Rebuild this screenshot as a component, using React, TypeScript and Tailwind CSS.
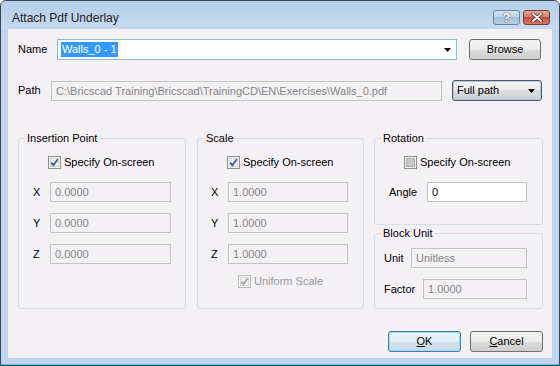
import React from 'react';

// Win7-style check box, drawn as a small svg
function CheckBox({ checked, disabled }: { checked?: boolean; disabled?: boolean }) {
  const edge = disabled ? '#bcbcbc' : '#8e8f8f';
  const mark = disabled ? '#a8a8a8' : '#3f5a94';
  const inner = checked || disabled ? '#f3f3f3' : '#c9c9c9';
  return (
    <svg width="13" height="13" viewBox="0 0 13 13" className="shrink-0">
      <rect x="0.5" y="0.5" width="12" height="12" fill="#f7f7f7" stroke={edge} />
      <rect x="2.5" y="2.5" width="8" height="8" fill={inner} stroke={checked || disabled ? '#d6d6d6' : '#a9a9a9'} />
      {checked && <path d="M3.2 6.6 L5.4 9.2 L9.8 3.2" fill="none" stroke={mark} strokeWidth="1.8" />}
    </svg>
  );
}

function Check({ label, checked, disabled }: { label: string; checked?: boolean; disabled?: boolean }) {
  return (
    <div className={'flex items-center h-[13px] gap-[3px] ' + (disabled ? 'text-[#9a9a9a]' : 'text-black')}>
      <CheckBox checked={checked} disabled={disabled} />
      <span className="leading-[13px]">{label}</span>
    </div>
  );
}

function TextBox({ value, white, className }: { value: string; white?: boolean; className: string }) {
  return (
    <div
      className={
        'h-[20px] flex items-center px-[4px] border whitespace-nowrap overflow-hidden ' +
        (white ? 'bg-white border-[#c3c3c3] text-black ' : 'bg-[#f4f1f5] border-[#c4c4c4] text-[#858585] ') +
        className
      }
    >
      {value}
    </div>
  );
}

function Arrow() {
  return (
    <svg width="7" height="4" viewBox="0 0 7 4">
      <path d="M0 0 H7 L3.5 4 Z" fill="#000" />
    </svg>
  );
}

function Group({ title, className, children }: { title: string; className: string; children?: React.ReactNode }) {
  return (
    <fieldset className={'border border-[#d3dde4] rounded-[3px] min-w-0 ' + className}>
      <legend className="ml-[6px] px-[2px] leading-[13px]">{title}</legend>
      {children}
    </fieldset>
  );
}

function Row({ label, labelW, value, boxW, pl, className }: { label: string; labelW: string; value: string; boxW: string; pl: string; className: string }) {
  return (
    <div className={'flex items-center ' + pl + ' ' + className}>
      <span className={labelW}>{label}</span>
      <TextBox value={value} className={boxW} />
    </div>
  );
}

export default function App() {
  return (
    <div className="w-[560px] h-[366px] bg-white font-['Liberation_Sans',Arial,sans-serif] text-[11px] text-black">
      <div className="w-[560px] h-[366px] rounded-t-[6px] border border-[#39444f] bg-[#bfd5ef] flex flex-col overflow-hidden">
        {/* Title bar */}
        <div className="h-[28px] flex items-start justify-between bg-[linear-gradient(#b6cee9,#c6daf1)] rounded-t-[5px]">
          <span className="pl-[11px] pt-[10px] text-[12px] leading-[14px] text-[#1b1b1b]">Attach Pdf Underlay</span>
          <div className="flex gap-[3px] pt-[9px] pr-[9px]">
            <div className="w-[27px] h-[15px] rounded-[3px] border border-[#6d84a3] bg-[linear-gradient(#d7e4f3_0%,#bccee6_50%,#a9bfdc_50%,#b9cde6_100%)] flex items-center justify-center">
              <span className="text-white text-[13px] leading-[13px] font-bold [text-shadow:0_0_1px_#2c3e55,0_0_1px_#2c3e55]">?</span>
            </div>
            <div className="w-[27px] h-[15px] rounded-[3px] border border-[#7b3b34] bg-[linear-gradient(#e8a493_0%,#d27763_50%,#c0503c_50%,#d47a62_100%)] flex items-center justify-center">
              <svg width="12" height="9" viewBox="0 0 12 9">
                <path d="M2 1 L10 8 M10 1 L2 8" stroke="#4d2320" strokeWidth="3.4" strokeLinecap="round" />
                <path d="M2 1 L10 8 M10 1 L2 8" stroke="#fff" strokeWidth="1.8" strokeLinecap="round" />
              </svg>
            </div>
          </div>
        </div>

        {/* Client area */}
        <div className="mx-[7px] h-[329px] bg-[#f4f1f5] pl-[10px] flex flex-col">
          {/* Name */}
          <div className="mt-[10px] flex items-center h-[21px]">
            <span className="w-[39px]">Name</span>
            <div className="w-[400px] h-[21px] bg-white border border-[#93b9e3] flex items-center pl-[3px] pr-[5px]">
              <span className="bg-[#3399ff] text-white leading-[15px] px-[1px]">Walls_0 - 1</span>
              <span className="ml-auto flex"><Arrow /></span>
            </div>
            <button className="ml-[12px] w-[72px] h-[21px] rounded-[3px] border border-[#707070] bg-[linear-gradient(#f2f2f2_0%,#ebebeb_50%,#dddddd_50%,#cfcfcf_100%)] text-[11px]">
              Browse
            </button>
          </div>

          {/* Path */}
          <div className="mt-[20px] flex items-end h-[21px]">
            <span className="w-[33px] self-center">Path</span>
            <TextBox value="C:\Bricscad Training\Bricscad\TrainingCD\EN\Exercises\Walls_0.pdf" className="w-[391px]" />
            <div className="ml-[10px] w-[90px] h-[21px] rounded-[3px] border border-[#5b5b5b] shadow-[inset_0_0_0_1px_#a9cbec] bg-[linear-gradient(#f2f2f2_0%,#ebebeb_50%,#dddddd_50%,#cfcfcf_100%)] flex items-center pl-[4px] pr-[6px]">
              <span className="leading-[15px]">Full path</span>
              <span className="ml-auto flex"><Arrow /></span>
            </div>
          </div>

          {/* Groups */}
          <div className="mt-[31px] flex items-start">
            <Group title="Insertion Point" className="w-[168px] h-[177px]">
              <div className="mt-[11px] pl-[29px]">
                <Check label="Specify On-screen" checked />
              </div>
              <Row label="X" labelW="w-[17px]" value="0.0000" boxW="w-[121px]" pl="pl-[14px]" className="mt-[13px]" />
              <Row label="Y" labelW="w-[17px]" value="0.0000" boxW="w-[121px]" pl="pl-[14px]" className="mt-[11px]" />
              <Row label="Z" labelW="w-[17px]" value="0.0000" boxW="w-[121px]" pl="pl-[14px]" className="mt-[11px]" />
            </Group>

            <Group title="Scale" className="ml-[11px] w-[167px] h-[177px]">
              <div className="mt-[11px] pl-[29px]">
                <Check label="Specify On-screen" checked />
              </div>
              <Row label="X" labelW="w-[17px]" value="1.0000" boxW="w-[120px]" pl="pl-[13px]" className="mt-[13px]" />
              <Row label="Y" labelW="w-[17px]" value="1.0000" boxW="w-[120px]" pl="pl-[13px]" className="mt-[11px]" />
              <Row label="Z" labelW="w-[17px]" value="1.0000" boxW="w-[120px]" pl="pl-[13px]" className="mt-[11px]" />
              <div className="mt-[11px] pl-[40px]">
                <Check label="Uniform Scale" checked disabled />
              </div>
            </Group>

            <div className="ml-[10px] w-[169px] flex flex-col">
              <Group title="Rotation" className="w-[169px] h-[93px]">
                <div className="mt-[11px] pl-[29px]">
                  <Check label="Specify On-screen" />
                </div>
                <div className="mt-[13px] pl-[14px] flex items-center">
                  <span className="w-[38px]">Angle</span>
                  <TextBox value="0" white className="w-[100px]" />
                </div>
              </Group>
              <Group title="Block Unit" className="mt-[2px] w-[169px] h-[82px]">
                <Row label="Unit" labelW="w-[27px]" value="Unitless" boxW="w-[116px]" pl="pl-[9px]" className="mt-[8px]" />
                <Row label="Factor" labelW="w-[39px]" value="1.0000" boxW="w-[104px]" pl="pl-[9px]" className="mt-[11px]" />
              </Group>
            </div>
          </div>

          {/* Buttons */}
          <div className="mt-[22px] flex justify-end gap-[9px] pr-[9px]">
            <button className="w-[73px] h-[21px] rounded-[3px] border border-[#3c7fb1] shadow-[inset_0_0_0_1px_#9fdaf6] bg-[linear-gradient(#eaf4fa_0%,#e2eef6_50%,#d3e3ef_50%,#c8dbe9_100%)] text-[11px]">
              <span className="underline">O</span>K
            </button>
            <button className="w-[73px] h-[21px] rounded-[3px] border border-[#707070] bg-[linear-gradient(#f2f2f2_0%,#ebebeb_50%,#dddddd_50%,#cfcfcf_100%)] text-[11px]">
              <span className="underline">C</span>ancel
            </button>
          </div>
        </div>

        <div className="h-[6px]" />
        <div className="h-[1px] bg-[#5cc3e6]" />
      </div>
    </div>
  );
}
